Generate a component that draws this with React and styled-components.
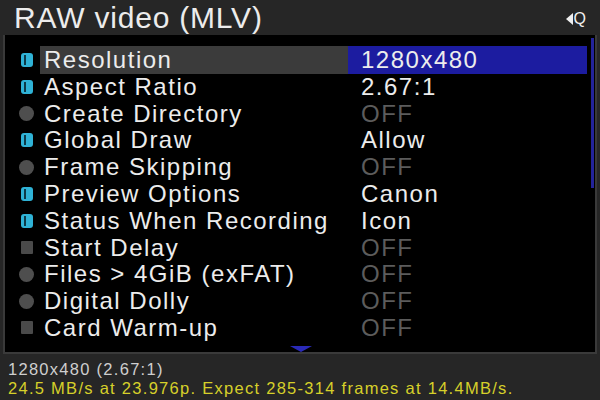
import React from 'react';
import styled, { createGlobalStyle } from 'styled-components';

const GlobalStyle = createGlobalStyle`
  html, body {
    margin: 0;
    padding: 0;
    background: #000;
  }
  body {
    font-family: "Liberation Sans", Arial, sans-serif;
  }
`;

const Screen = styled.div`
  width: 600px;
  height: 400px;
  display: flex;
  flex-direction: column;
  background: #262626;
  overflow: hidden;
`;

const TitleBar = styled.div`
  height: 35px;
  display: flex;
  align-items: center;
  justify-content: space-between;
  padding: 0 14px 0 14px;
  background: #262626;
  color: #ececec;
`;

const Title = styled.h1`
  margin: 0;
  font-size: 30px;
  font-weight: normal;
  letter-spacing: 0.8px;
  line-height: 35px;
`;

const QIcon = styled.div`
  display: flex;
  align-items: center;
  gap: 1px;
  color: #f0f0f0;
  font-size: 16px;
  margin-top: 2px;

  &::before {
    content: '';
    border-top: 6px solid transparent;
    border-bottom: 6px solid transparent;
    border-right: 7px solid #f0f0f0;
  }
`;

const Panel = styled.div`
  position: relative;
  height: 319px;
  margin: 0 3px 0 3px;
  background: #000;
  border-left: 2px solid #3a3a3a;
  border-right: 2px solid #3a3a3a;
  border-bottom: 2px solid #3a3a3a;
  padding-top: 11px;
  box-sizing: border-box;
`;

const List = styled.div`
  display: flex;
  flex-direction: column;
  padding-right: 8px;
`;

const Row = styled.div`
  height: 26.8px;
  display: grid;
  grid-template-columns: 35px 308px 1fr;
  align-items: center;
  font-size: 24px;
  letter-spacing: 1.5px;
`;

const IconCell = styled.div`
  display: flex;
  justify-content: center;
  padding-left: 8px;
`;

const Label = styled.div`
  height: 100%;
  display: flex;
  align-items: center;
  padding-left: 4px;
  color: #ececec;
  background: ${p => (p.selected ? '#3b3b3b' : 'transparent')};
  white-space: nowrap;
`;

const Value = styled.div`
  height: 100%;
  display: flex;
  align-items: center;
  padding-left: 13px;
  background: ${p => (p.selected ? '#1c1ca0' : 'transparent')};
  color: ${p => (p.off ? '#5c5c5c' : '#ececec')};
`;

const BlueIcon = styled.span`
  position: relative;
  width: 12px;
  height: 14px;
  border-radius: 3px;
  background: #2fb2d6;

  &::after {
    content: '';
    position: absolute;
    left: 3px;
    top: 2px;
    width: 2px;
    height: 10px;
    background: #0d3a48;
  }
`;

const Dot = styled.span`
  width: 15px;
  height: 15px;
  border-radius: 50%;
  background: #4e4e4e;
`;

const Square = styled.span`
  width: 12px;
  height: 13px;
  border-radius: 1px;
  background: #4a4a4a;
`;

const Scroll = styled.div`
  position: absolute;
  right: 1px;
  top: 3px;
  width: 3px;
  height: 150px;
  background: #23239a;
`;

const MoreArrow = styled.div`
  position: absolute;
  left: 285px;
  bottom: 0;
  width: 0;
  height: 0;
  border-left: 11px solid transparent;
  border-right: 11px solid transparent;
  border-top: 6px solid #2a2ab8;
`;

const InfoBar = styled.div`
  flex: 1;
  padding: 6px 8px 0 8px;
  background: #262626;
  font-size: 16.5px;
  letter-spacing: 1.28px;
  line-height: 19px;
`;

const InfoLine = styled.div`
  color: ${p => p.color};
  white-space: nowrap;
`;

const items = [
  { label: 'Resolution', value: '1280x480', icon: 'blue', selected: true },
  { label: 'Aspect Ratio', value: '2.67:1', icon: 'blue' },
  { label: 'Create Directory', value: 'OFF', icon: 'dot', off: true },
  { label: 'Global Draw', value: 'Allow', icon: 'blue' },
  { label: 'Frame Skipping', value: 'OFF', icon: 'dot', off: true },
  { label: 'Preview Options', value: 'Canon', icon: 'blue' },
  { label: 'Status When Recording', value: 'Icon', icon: 'blue' },
  { label: 'Start Delay', value: 'OFF', icon: 'square', off: true },
  { label: 'Files > 4GiB (exFAT)', value: 'OFF', icon: 'dot', off: true },
  { label: 'Digital Dolly', value: 'OFF', icon: 'dot', off: true },
  { label: 'Card Warm-up', value: 'OFF', icon: 'square', off: true },
];

const renderIcon = type => {
  if (type === 'blue') return <BlueIcon />;
  if (type === 'dot') return <Dot />;
  return <Square />;
};

export default function App() {
  return (
    <Screen>
      <GlobalStyle />
      <TitleBar>
        <Title>RAW video (MLV)</Title>
        <QIcon>Q</QIcon>
      </TitleBar>
      <Panel>
        <List>
          {items.map(item => (
            <Row key={item.label}>
              <IconCell>{renderIcon(item.icon)}</IconCell>
              <Label selected={item.selected}>{item.label}</Label>
              <Value selected={item.selected} off={item.off}>{item.value}</Value>
            </Row>
          ))}
        </List>
        <Scroll />
        <MoreArrow />
      </Panel>
      <InfoBar>
        <InfoLine color="#cfcfcf">1280x480 (2.67:1)</InfoLine>
        <InfoLine color="#d6d02a">24.5 MB/s at 23.976p. Expect 285-314 frames at 14.4MB/s.</InfoLine>
      </InfoBar>
    </Screen>
  );
}
